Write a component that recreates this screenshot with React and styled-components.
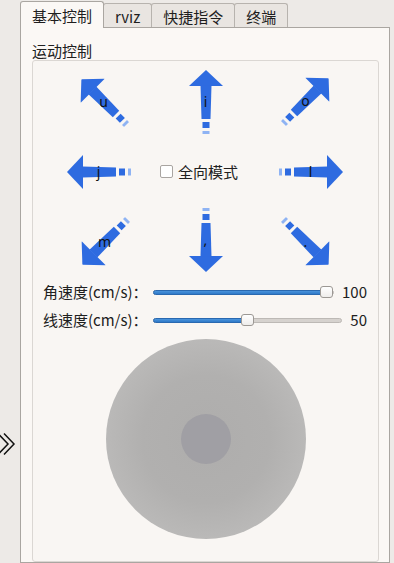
import React from "react";
import styled, { createGlobalStyle } from "styled-components";

const Global = createGlobalStyle`
  html, body { margin: 0; padding: 0; background: #edeae7; }
  body { font-family: "Noto Sans CJK SC", "Noto Sans", sans-serif; color: #202020; }
  * { box-sizing: border-box; }
`;

const Screen = styled.div`
  width: 394px;
  height: 563px;
  overflow: hidden;
  display: flex;
  background: #edeae7;
`;

const SplitHandle = styled.div`
  width: 20px;
  flex: none;
  padding-top: 432px;
`;

const TabWidget = styled.div`
  width: 370px;
  flex: none;
  display: flex;
  flex-direction: column;
`;

const TabBar = styled.div`
  display: flex;
  align-items: flex-end;
  height: 27px;
  position: relative;
  z-index: 1;
`;

const Tab = styled.div`
  height: ${(p) => (p.$active ? "27px" : "24px")};
  margin-bottom: ${(p) => (p.$active ? "-1px" : "0")};
  margin-left: ${(p) => (p.$first ? "0" : "-1px")};
  padding: ${(p) => (p.$active ? "4px" : "3px")} 11px 0;
  border: 1px solid ${(p) => (p.$active ? "#aaa6a1" : "#b7b3ae")};
  border-bottom: none;
  border-radius: 3px 3px 0 0;
  background: ${(p) => (p.$active ? "#fbf8f5" : "#e9e5e1")};
  font-size: 15px;
  line-height: 20px;
  color: #1e1e1e;
  white-space: nowrap;
  position: relative;
  z-index: ${(p) => (p.$active ? 2 : 1)};
`;

const Pane = styled.div`
  flex: 1;
  display: flex;
  flex-direction: column;
  border: 1px solid #aaa6a1;
  background: #fbf8f5;
  padding: 14px 10px 0 11px;
`;

const GroupTitle = styled.div`
  font-size: 15px;
  line-height: 18px;
  height: 18px;
  padding-left: 0;
`;

const GroupFrame = styled.div`
  flex: 1;
  border: 1px solid #dbd7d3;
  border-radius: 3px;
  background: #f9f6f3;
  display: flex;
  flex-direction: column;
`;

const PadGrid = styled.div`
  display: grid;
  grid-template-columns: repeat(3, 101px);
  grid-auto-rows: 70px;
  padding: 6px 0 0 21px;
`;

const Cell = styled.div`
  display: grid;
  place-items: center;
`;

const Mover = styled.div`
  display: grid;
  place-items: center;
  transform: translate(${(p) => p.$dx || 0}px, ${(p) => p.$dy || 0}px);
  & > * { grid-area: 1 / 1; }
`;

const ArrowIcon = styled.svg`
  display: block;
  transform: rotate(${(p) => p.$angle}deg);
`;

const KeyLabel = styled.span`
  font-family: "Noto Sans", "DejaVu Sans", sans-serif;
  font-size: 14px;
  line-height: 16px;
  color: #111;
  position: relative;
`;

const ModeCell = styled.label`
  display: flex;
  align-items: center;
  gap: 5px;
  padding-left: 5px;
  font-size: 15px;
  line-height: 20px;
`;

const CheckBox = styled.span`
  width: 13px;
  height: 13px;
  border: 1px solid #a9a5a1;
  border-radius: 2px;
  background: #ffffff;
  flex: none;
  margin-top: -1px;
`;

const Sliders = styled.div`
  margin-top: 1px;
  display: flex;
  flex-direction: column;
`;

const SliderRow = styled.div`
  height: 28px;
  display: flex;
  align-items: center;
  gap: 8px;
  padding: 0 11px 0 10px;
`;

const SliderLabel = styled.span`
  width: 102px;
  flex: none;
  font-size: 15px;
  line-height: 20px;
  white-space: nowrap;
`;

const Track = styled.div`
  position: relative;
  flex: 1;
  height: 5px;
  border-radius: 3px;
  background: #d6d2ce;
  border: 1px solid #bdb9b5;
`;

const Fill = styled.div`
  position: absolute;
  left: -1px;
  top: -1px;
  bottom: -1px;
  border-radius: 3px;
  background: linear-gradient(#4a94dc, #2f79c8);
  border: 1px solid #2a69b0;
`;

const Thumb = styled.div`
  position: absolute;
  top: 50%;
  width: 13px;
  height: 12px;
  margin-top: -6px;
  margin-left: -6.5px;
  background: linear-gradient(#ffffff, #efedeb);
  border: 1px solid #9c9894;
  border-radius: 3px;
`;

const Value = styled.span`
  font-size: 15px;
  line-height: 20px;
  flex: none;
`;

const JoyWrap = styled.div`
  display: flex;
  justify-content: center;
  padding-top: 5px;
`;

const JoyBase = styled.div`
  width: 200px;
  height: 200px;
  border-radius: 50%;
  background: radial-gradient(circle, #aeadac 0%, #b1b0af 45%, #c4c3c2 100%);
  display: flex;
  align-items: center;
  justify-content: center;
`;

const JoyKnob = styled.div`
  width: 50px;
  height: 50px;
  border-radius: 50%;
  background: #a09fa4;
`;

const BLUE = "#2e6be0";
const LIGHT = "#8fb3f3";

function Arrow({ angle }) {
  return (
    <ArrowIcon viewBox="0 0 34 64" width="34" height="64" $angle={angle}>
      <polygon points="17,0 34,16 0,16" fill={BLUE} />
      <polygon points="11.5,15.5 22.5,15.5 21.5,49 12.5,49" fill={BLUE} />
      <rect x="13.5" y="52" width="7" height="6" fill={BLUE} />
      <rect x="13.5" y="61" width="7" height="3" fill={LIGHT} />
    </ArrowIcon>
  );
}

const keys = [
  { k: "u", a: -45, dx: -1, dy: 0 },
  { k: "i", a: 0, dx: 0, dy: 0 },
  { k: "o", a: 45, dx: -1, dy: -1 },
  { k: "j", a: -90, dx: -6, dy: 0 },
  null,
  { k: "l", a: 90, dx: 4, dy: 0 },
  { k: "m", a: -135, dx: 0, dy: 0 },
  { k: ",", a: 180, dx: 0, dy: -2 },
  { k: ".", a: 135, dx: -1, dy: 0 },
];

function Slider({ ratio }) {
  const pos = `calc(6.5px + (100% - 13px) * ${ratio})`;
  return (
    <Track>
      <Fill style={{ width: pos }} />
      <Thumb style={{ left: pos }} />
    </Track>
  );
}

export default function App() {
  return (
    <Screen>
      <Global />
      <SplitHandle>
        <svg width="16" height="24" viewBox="0 0 16 24">
          <path d="M-2 1.5 L8 12 L-2 22.5" fill="none" stroke="#111" strokeWidth="1.5" />
          <path d="M4 1.5 L14 12 L4 22.5" fill="none" stroke="#111" strokeWidth="1.5" />
        </svg>
      </SplitHandle>
      <TabWidget>
        <TabBar>
          <Tab $active $first>基本控制</Tab>
          <Tab>rviz</Tab>
          <Tab>快捷指令</Tab>
          <Tab>终端</Tab>
        </TabBar>
        <Pane>
          <GroupTitle>运动控制</GroupTitle>
          <GroupFrame>
            <PadGrid>
              {keys.map((item, i) =>
                item ? (
                  <Cell key={i}>
                    <Mover $dx={item.dx} $dy={item.dy}>
                      <Arrow angle={item.a} />
                      <KeyLabel>{item.k}</KeyLabel>
                    </Mover>
                  </Cell>
                ) : (
                  <Cell key={i} style={{ placeItems: "center start" }}>
                    <ModeCell>
                      <CheckBox />
                      全向模式
                    </ModeCell>
                  </Cell>
                )
              )}
            </PadGrid>
            <Sliders>
              <SliderRow>
                <SliderLabel>角速度(cm/s)：</SliderLabel>
                <Slider ratio={1} />
                <Value>100</Value>
              </SliderRow>
              <SliderRow>
                <SliderLabel>线速度(cm/s)：</SliderLabel>
                <Slider ratio={0.5} />
                <Value>50</Value>
              </SliderRow>
            </Sliders>
            <JoyWrap>
              <JoyBase>
                <JoyKnob />
              </JoyBase>
            </JoyWrap>
          </GroupFrame>
        </Pane>
      </TabWidget>
    </Screen>
  );
}
